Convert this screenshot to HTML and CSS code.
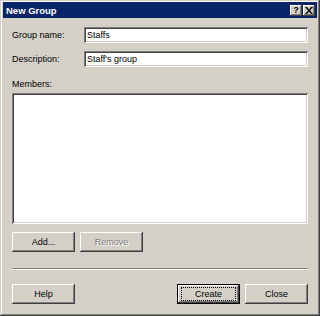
FILE: index.html
```html
<!DOCTYPE html>
<html lang="en">
<head>
    <meta charset="UTF-8">
    <meta name="viewport" content="width=device-width, initial-scale=1.0">
    <title>New Group</title>
    <link rel="stylesheet" href="styles.css">
</head>
<body>

    <div class="window">
        <div class="titlebar">
            <span class="title">New Group</span>
            <div class="caption-buttons">
                <span class="cap-btn">?</span>
                <span class="cap-btn">
                    <svg width="8" height="7" viewBox="0 0 8 7">
                        <path d="M0 0h2l2 2.5L6 0h2L5 3.5 8 7H6L4 4.5 2 7H0l3-3.5z" fill="#000"/>
                    </svg>
                </span>
            </div>
        </div>

        <div class="content">
            <div class="field">
                <label for="groupName">Group name:</label>
                <input type="text" id="groupName" class="textbox" value="Staffs">
            </div>
            <div class="field">
                <label for="description">Description:</label>
                <input type="text" id="description" class="textbox" value="Staff's group">
            </div>

            <div class="members-label">Members:</div>
            <div class="listbox"></div>

            <div class="button-row">
                <button class="btn">Add...</button>
                <button class="btn" disabled>Remove</button>
            </div>

            <div class="separator"></div>

            <div class="footer">
                <button class="btn">Help</button>
                <div class="button-row">
                    <button class="btn default"><span class="focus">Create</span></button>
                    <button class="btn">Close</button>
                </div>
            </div>
        </div>
    </div>

</body>
</html>
```

FILE: styles.css
```css
body {
    margin: 0;
    font-family: "Liberation Sans", Arial, sans-serif;
    font-size: 9px;
    color: #000;
    background-color: #d4d0c8;
}
.window {
    width: 320px;
    height: 316px;
    box-sizing: border-box;
    padding: 2px 3px 3px 3px;
    background-color: #d4d0c8;
    box-shadow: inset -1px -1px #404040, inset 1px 1px #d4d0c8,
                inset -2px -2px #808080, inset 2px 2px #fff;
    display: flex;
    flex-direction: column;
}
.titlebar {
    height: 16px;
    background-color: #0a246a;
    display: flex;
    align-items: center;
    justify-content: space-between;
    padding: 0 2px 0 3px;
}
.title {
    color: #fff;
    font-weight: bold;
    font-size: 9.5px;
}
.caption-buttons {
    display: flex;
    gap: 1px;
}
.cap-btn {
    width: 12px;
    height: 11px;
    box-sizing: border-box;
    background-color: #d4d0c8;
    box-shadow: inset -1px -1px #404040, inset 1px 1px #fff, inset -2px -2px #808080;
    display: flex;
    align-items: center;
    justify-content: center;
    font-weight: bold;
    font-size: 9px;
    line-height: 1;
}
.content {
    padding: 9px 9px 0 9px;
    display: flex;
    flex-direction: column;
}
.field {
    display: flex;
    align-items: center;
    margin-bottom: 8px;
}
.field label {
    width: 72px;
    flex: none;
}
.textbox {
    flex: 1;
    height: 16px;
    box-sizing: border-box;
    margin: 0;
    border: none;
    padding: 0 3px;
    font-family: inherit;
    font-size: 9px;
    color: #000;
    background-color: #fff;
    box-shadow: inset 1px 1px #808080, inset -1px -1px #fff,
                inset 2px 2px #404040, inset -2px -2px #d4d0c8;
    outline: none;
}
.members-label {
    margin-top: 4px;
    line-height: 11px;
}
.listbox {
    margin-top: 3px;
    height: 131px;
    background-color: #fff;
    box-shadow: inset 1px 1px #808080, inset -1px -1px #fff,
                inset 2px 2px #404040, inset -2px -2px #d4d0c8;
}
.button-row {
    display: flex;
    gap: 5px;
}
.content > .button-row {
    margin-top: 8px;
}
.btn {
    width: 63px;
    height: 20px;
    margin: 0;
    padding: 0;
    border: none;
    font-family: inherit;
    font-size: 9px;
    color: #000;
    background-color: #d4d0c8;
    box-shadow: inset -1px -1px #404040, inset 1px 1px #fff,
                inset -2px -2px #808080, inset 2px 2px #d4d0c8;
}
.btn:disabled {
    color: #808080;
    text-shadow: 1px 1px #fff;
}
.btn.default {
    box-shadow: inset 0 0 0 1px #000, inset -2px -2px #404040, inset 2px 2px #fff,
                inset -3px -3px #808080;
}
.focus {
    display: flex;
    align-items: center;
    justify-content: center;
    margin: 0 4px;
    height: 12px;
    border: 1px dotted #000;
}
.separator {
    margin-top: 16px;
    height: 1px;
    border-top: 1px solid #808080;
    border-bottom: 1px solid #fff;
    height: 0;
}
.footer {
    margin-top: 14px;
    display: flex;
    justify-content: space-between;
}
```
